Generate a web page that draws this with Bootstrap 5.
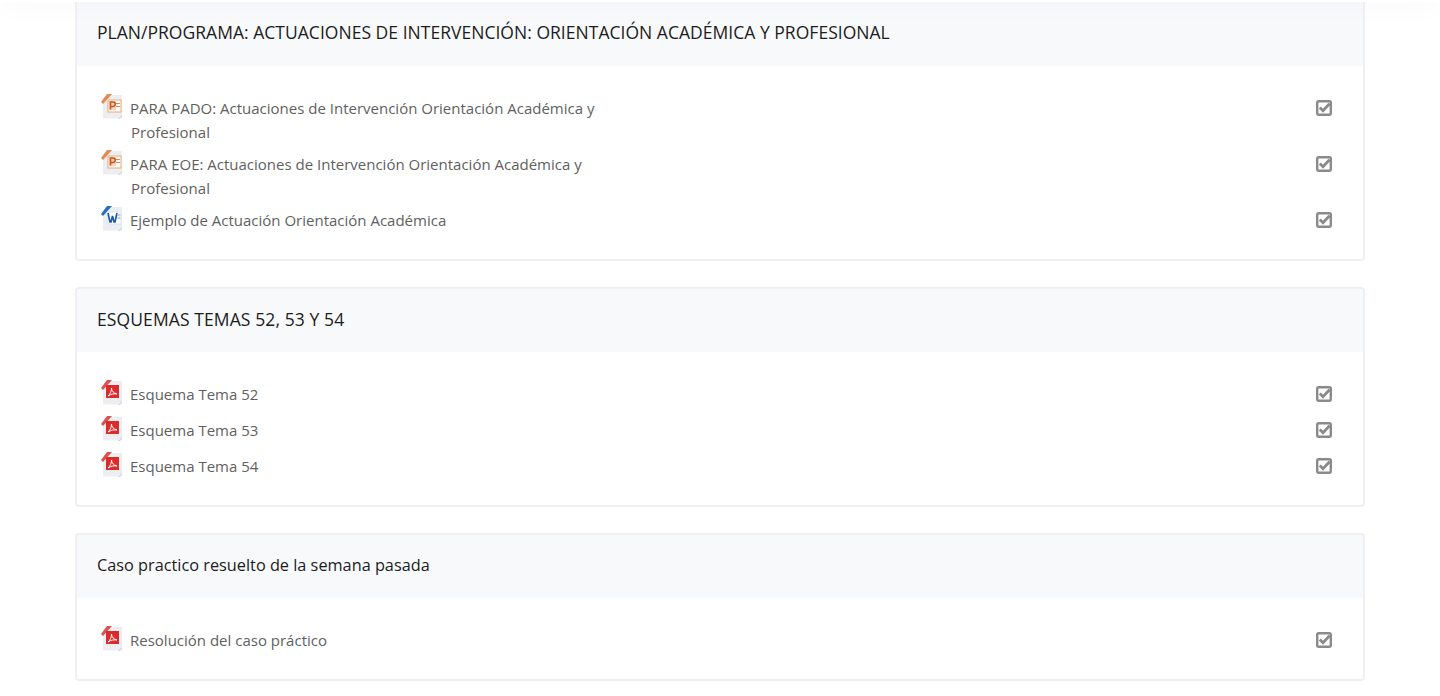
<!DOCTYPE html>
<html lang="es">
<head>
  <meta charset="UTF-8" />
  <meta name="viewport" content="width=device-width, initial-scale=1.0" />
  <title>Recursos</title>
  <link href="https://cdn.jsdelivr.net/npm/bootstrap@5.3.0/dist/css/bootstrap.min.css" rel="stylesheet" />
  <style>
    html, body {
      height: 696px;
      overflow: hidden;
    }
    body {
      background: #fff;
      font-family: "Open Sans", sans-serif;
      color: #5f5f5f;
    }
    .top-shadow {
      height: 2px;
      background: #fff;
      box-shadow: 0 2px 22px rgba(60, 70, 90, 0.16);
      z-index: 1030;
    }
    .page-wrap {
      width: 1290px;
      margin: 2px auto 0;
    }
    .res-card {
      border: 2px solid #eff0f3;
      border-radius: 4px;
      margin-bottom: 26px;
      overflow: hidden;
    }
    .res-card.cut-top {
      border-top: 0;
      border-radius: 0 0 4px 4px;
    }
    .res-head {
      height: 63px;
      padding: 0 20px;
      background: #f8f9fb;
      color: #1c1c1c;
      font-size: 17.5px;
      line-height: 60px;
      letter-spacing: .025px;
    }
    .cut-top .res-head {
      height: 64px;
    }
    .res-head.head-caps {
      letter-spacing: .1px;
    }
    .res-head.head-small {
      font-size: 16.3px;
      letter-spacing: 0;
    }
    .res-body {
      padding: 30px 23px 15px;
    }
    .res-row {
      height: 36px;
    }
    .res-row.two-line {
      height: 56px;
    }
    .res-left {
      width: 510px;
      font-size: 15px;
      line-height: 24px;
    }
    .file-ico {
      width: 24px;
      height: 26px;
      margin: -2px 6px 0 0;
      flex: none;
      filter: blur(.3px);
    }
    .res-left span {
      text-indent: -1px;
      padding-left: 1px;
    }
    .check-ico {
      width: 18px;
      height: 18px;
      margin: 3px 7px 0 0;
    }
  </style>
</head>
<body>
  <svg width="0" height="0" class="position-absolute">
    <defs>
      <symbol id="doc" viewBox="0 0 24 26">
        <path d="M3 8 9 1h13v21l-3 2.500H3z" fill="#eceef1" />
        <path d="M22 21v2l-2 2h-2z" fill="#d4d5d8" />
      </symbol>
      <symbol id="ico-ppt" viewBox="0 0 24 26">
        <use href="#doc" />
        <path d="M1 8 7 0h5L3 10z" fill="#e08a56" />
        <rect x="8" y="6" width="13" height="12" fill="#fff" stroke="#f0a877" />
        <rect x="9" y="7" width="7" height="9" fill="#f9d3b8" />
        <path d="M10.500 15.500V8h2.500a2 2 0 0 1 0 4.500h-2.500" fill="none" stroke="#c9561f" stroke-width="1.500" />
        <path d="M16 9.500h4M16 12.500h4" stroke="#e08a56" />
      </symbol>
      <symbol id="ico-doc" viewBox="0 0 24 26">
        <use href="#doc" />
        <path d="M1 8 7 0h5L3 10z" fill="#2a70b8" />
        <rect x="8" y="6" width="13" height="12" fill="#fff" stroke="#dbe5f1" />
        <path d="M8 7l2 9h1l1.500-6 1.500 6h1l2-9" fill="none" stroke="#1d5ca8" stroke-width="1.700" />
        <path d="M17.500 9h3M17.500 12h3" stroke="#7c9ccb" />
      </symbol>
      <symbol id="ico-pdf" viewBox="0 0 24 26">
        <use href="#doc" />
        <path d="M1 8 7 0h5L3 10z" fill="#d9534f" />
        <rect x="6" y="5" width="13" height="13" fill="#dd2b2b" />
        <path d="M8 16c2.500-2 3.500-5 3.500-8 0 3 2 5 5.500 6-3-.5-6 0-9 2z" fill="none" stroke="#fff" stroke-width="1" />
      </symbol>
      <symbol id="ico-check" viewBox="0 0 18 18">
        <rect x="2.200" y="2.200" width="13.600" height="13.600" rx="1.500" fill="none" stroke="#8a8a8a" stroke-width="2.400" />
        <path d="M4.800 8.500l3.200 3.200 6.500-7" fill="none" stroke="#8a8a8a" stroke-width="2.800" />
      </symbol>
    </defs>
  </svg>

  <div class="top-shadow position-fixed top-0 start-0 end-0"></div>

  <div class="page-wrap">
    <div class="res-card cut-top">
      <div class="res-head">PLAN/PROGRAMA: ACTUACIONES DE INTERVENCIÓN: ORIENTACIÓN ACADÉMICA Y PROFESIONAL</div>
      <div class="res-body">
        <div class="res-row two-line d-flex justify-content-between">
          <div class="res-left d-flex"><svg class="file-ico"><use href="#ico-ppt" /></svg><span>PARA PADO: Actuaciones de Intervención Orientación Académica y Profesional</span></div>
          <svg class="check-ico"><use href="#ico-check" /></svg>
        </div>
        <div class="res-row two-line d-flex justify-content-between">
          <div class="res-left d-flex"><svg class="file-ico"><use href="#ico-ppt" /></svg><span>PARA EOE: Actuaciones de Intervención Orientación Académica y Profesional</span></div>
          <svg class="check-ico"><use href="#ico-check" /></svg>
        </div>
        <div class="res-row d-flex justify-content-between">
          <div class="res-left d-flex"><svg class="file-ico"><use href="#ico-doc" /></svg><span>Ejemplo de Actuación Orientación Académica</span></div>
          <svg class="check-ico"><use href="#ico-check" /></svg>
        </div>
      </div>
    </div>

    <div class="res-card">
      <div class="res-head head-caps">ESQUEMAS TEMAS 52, 53 Y 54</div>
      <div class="res-body">
        <div class="res-row d-flex justify-content-between">
          <div class="res-left d-flex"><svg class="file-ico"><use href="#ico-pdf" /></svg><span>Esquema Tema 52</span></div>
          <svg class="check-ico"><use href="#ico-check" /></svg>
        </div>
        <div class="res-row d-flex justify-content-between">
          <div class="res-left d-flex"><svg class="file-ico"><use href="#ico-pdf" /></svg><span>Esquema Tema 53</span></div>
          <svg class="check-ico"><use href="#ico-check" /></svg>
        </div>
        <div class="res-row d-flex justify-content-between">
          <div class="res-left d-flex"><svg class="file-ico"><use href="#ico-pdf" /></svg><span>Esquema Tema 54</span></div>
          <svg class="check-ico"><use href="#ico-check" /></svg>
        </div>
      </div>
    </div>

    <div class="res-card">
      <div class="res-head head-small">Caso practico resuelto de la semana pasada</div>
      <div class="res-body">
        <div class="res-row d-flex justify-content-between">
          <div class="res-left d-flex"><svg class="file-ico"><use href="#ico-pdf" /></svg><span>Resolución del caso práctico</span></div>
          <svg class="check-ico"><use href="#ico-check" /></svg>
        </div>
      </div>
    </div>
  </div>
</body>
</html>
